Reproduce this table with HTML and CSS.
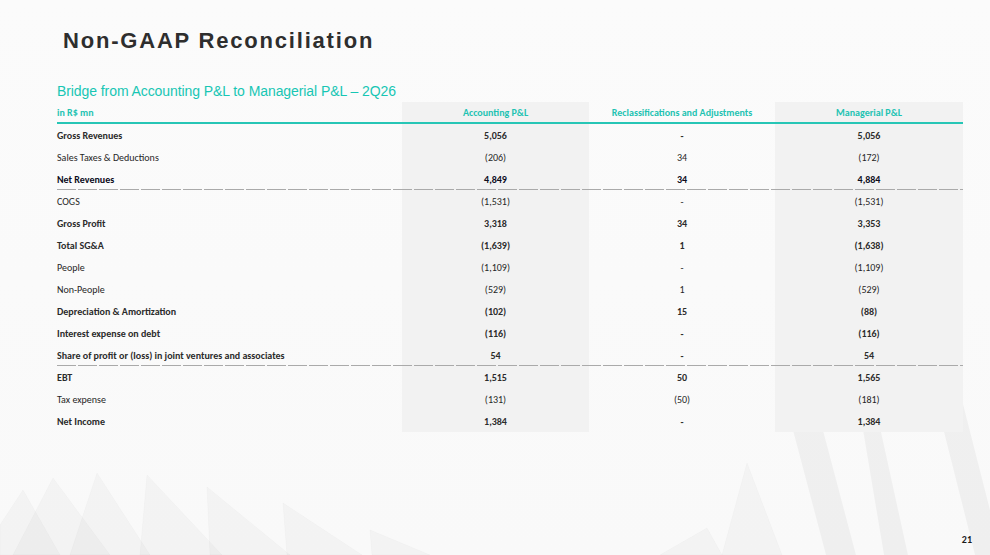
FILE: index.html
```html
<!DOCTYPE html>
<html lang="en">
<head>
<meta charset="utf-8">
<title>Non-GAAP Reconciliation</title>
<link rel="stylesheet" href="styles.css">
</head>
<body>
<div class="slide">
  <svg class="backdrop" width="990" height="555" viewBox="0 0 990 555" aria-hidden="true">
    <g class="pane">
      <polygon points="23,490 0,525 0,555 60,555"/>
      <polygon points="53,478 13,555 110,555"/>
      <polygon points="97,473 70,555 150,555"/>
      <polygon points="147,475 140,555 222,555"/>
      <polygon points="207,487 210,555 290,555"/>
      <polygon points="283,503 287,555 362,555"/>
      <polygon points="370,530 372,555 430,555"/>
      <polygon points="707,528 660,555 722,555"/>
      <polygon points="747,463 722,555 782,555"/>
    </g>
    <g class="streak">
      <polygon points="785,400 815,400 856,555 826,555"/>
      <polygon points="858,400 874,400 908,555 884,555"/>
      <polygon points="936,400 962,400 990,510 990,555 975,555"/>
    </g>
  </svg>

  <div class="content">
    <h1 class="title">Non-GAAP Reconciliation</h1>
    <h2 class="subtitle">Bridge from Accounting P&amp;L to Managerial P&amp;L – 2Q26</h2>

    <div class="table">
      <div class="row head">
        <div class="c lbl">in R$ mn</div>
        <div class="c g">Accounting P&amp;L</div>
        <div class="c">Reclassifications and Adjustments</div>
        <div class="c g">Managerial P&amp;L</div>
      </div>
      <div class="row b">
        <div class="c lbl">Gross Revenues</div><div class="c g">5,056</div><div class="c">-</div><div class="c g">5,056</div>
      </div>
      <div class="row">
        <div class="c lbl">Sales Taxes &amp; Deductions</div><div class="c g">(206)</div><div class="c">34</div><div class="c g">(172)</div>
      </div>
      <div class="row b dark">
        <div class="c lbl">Net Revenues</div><div class="c g">4,849</div><div class="c">34</div><div class="c g">4,884</div>
      </div>
      <div class="rule"></div>
      <div class="row">
        <div class="c lbl">COGS</div><div class="c g">(1,531)</div><div class="c">-</div><div class="c g">(1,531)</div>
      </div>
      <div class="row b">
        <div class="c lbl">Gross Profit</div><div class="c g">3,318</div><div class="c">34</div><div class="c g">3,353</div>
      </div>
      <div class="row b">
        <div class="c lbl">Total SG&amp;A</div><div class="c g">(1,639)</div><div class="c">1</div><div class="c g">(1,638)</div>
      </div>
      <div class="row">
        <div class="c lbl">People</div><div class="c g">(1,109)</div><div class="c">-</div><div class="c g">(1,109)</div>
      </div>
      <div class="row">
        <div class="c lbl">Non-People</div><div class="c g">(529)</div><div class="c">1</div><div class="c g">(529)</div>
      </div>
      <div class="row b">
        <div class="c lbl">Depreciation &amp; Amortization</div><div class="c g">(102)</div><div class="c">15</div><div class="c g">(88)</div>
      </div>
      <div class="row b">
        <div class="c lbl">Interest expense on debt</div><div class="c g">(116)</div><div class="c">-</div><div class="c g">(116)</div>
      </div>
      <div class="row b">
        <div class="c lbl">Share of profit or (loss) in joint ventures and associates</div><div class="c g">54</div><div class="c">-</div><div class="c g">54</div>
      </div>
      <div class="rule"></div>
      <div class="row b">
        <div class="c lbl">EBT</div><div class="c g">1,515</div><div class="c">50</div><div class="c g">1,565</div>
      </div>
      <div class="row">
        <div class="c lbl">Tax expense</div><div class="c g">(131)</div><div class="c">(50)</div><div class="c g">(181)</div>
      </div>
      <div class="row b">
        <div class="c lbl">Net Income</div><div class="c g">1,384</div><div class="c">-</div><div class="c g">1,384</div>
      </div>
    </div>
  </div>

  <div class="footer">21</div>
</div>
</body>
</html>
```

FILE: styles.css
```css
* { box-sizing: border-box; }

html, body {
  margin: 0;
  padding: 0;
  background: #fafafa;
}

.slide {
  position: relative;
  width: 990px;
  height: 555px;
  overflow: hidden;
  display: flex;
  flex-direction: column;
  background: linear-gradient(180deg, #fbfbfb 0%, #f9f9f9 100%);
}

.backdrop {
  position: absolute;
  left: 0;
  top: 0;
}

.pane polygon {
  fill: rgba(0, 0, 0, 0.022);
  stroke: rgba(0, 0, 0, 0.02);
  stroke-width: 1;
}

.streak polygon {
  fill: rgba(0, 0, 0, 0.04);
}

.content {
  position: relative;
  padding: 28px 27px 0 57px;
}

.title {
  margin: 0 0 0 6px;
  font-family: "Liberation Sans", Arial, sans-serif;
  font-weight: 700;
  font-size: 22px;
  line-height: 26px;
  letter-spacing: 1.8px;
  color: #2e2e2e;
}

.subtitle {
  margin: 29px 0 0 0;
  font-family: "Liberation Sans", Arial, sans-serif;
  font-weight: 400;
  font-size: 14px;
  line-height: 16px;
  letter-spacing: -0.08px;
  color: #17c6b4;
}

.table {
  margin-top: 3px;
  width: 906px;
  font-family: Carlito, Lato, "Open Sans", sans-serif;
  font-size: 10px;
  color: #262626;
}

.row {
  display: grid;
  grid-template-columns: 345px 187px 186px 188px;
  height: 22px;
}

.c {
  display: flex;
  align-items: center;
  justify-content: center;
  white-space: nowrap;
}

.c.lbl {
  justify-content: flex-start;
}

.c.g {
  background: #f2f2f2;
}

.row.head {
  border-bottom: 2px solid #27c6b6;
  color: #1fc3b2;
  font-weight: 700;
  font-size: 10px;
}

.row.b {
  font-weight: 700;
  color: #2b2b2b;
}

.row.dark {
  color: #0c0c1c;
}

.rule {
  position: relative;
  height: 1px;
  margin-top: -1px;
  background: repeating-linear-gradient(90deg, #aaaaaa 0 19px, transparent 19px 21px);
}

.footer {
  position: relative;
  margin-top: auto;
  align-self: flex-end;
  padding: 0 18px 9px 0;
  font-family: Carlito, Lato, sans-serif;
  font-weight: 700;
  font-size: 10px;
  color: #1c1c1c;
}
```
